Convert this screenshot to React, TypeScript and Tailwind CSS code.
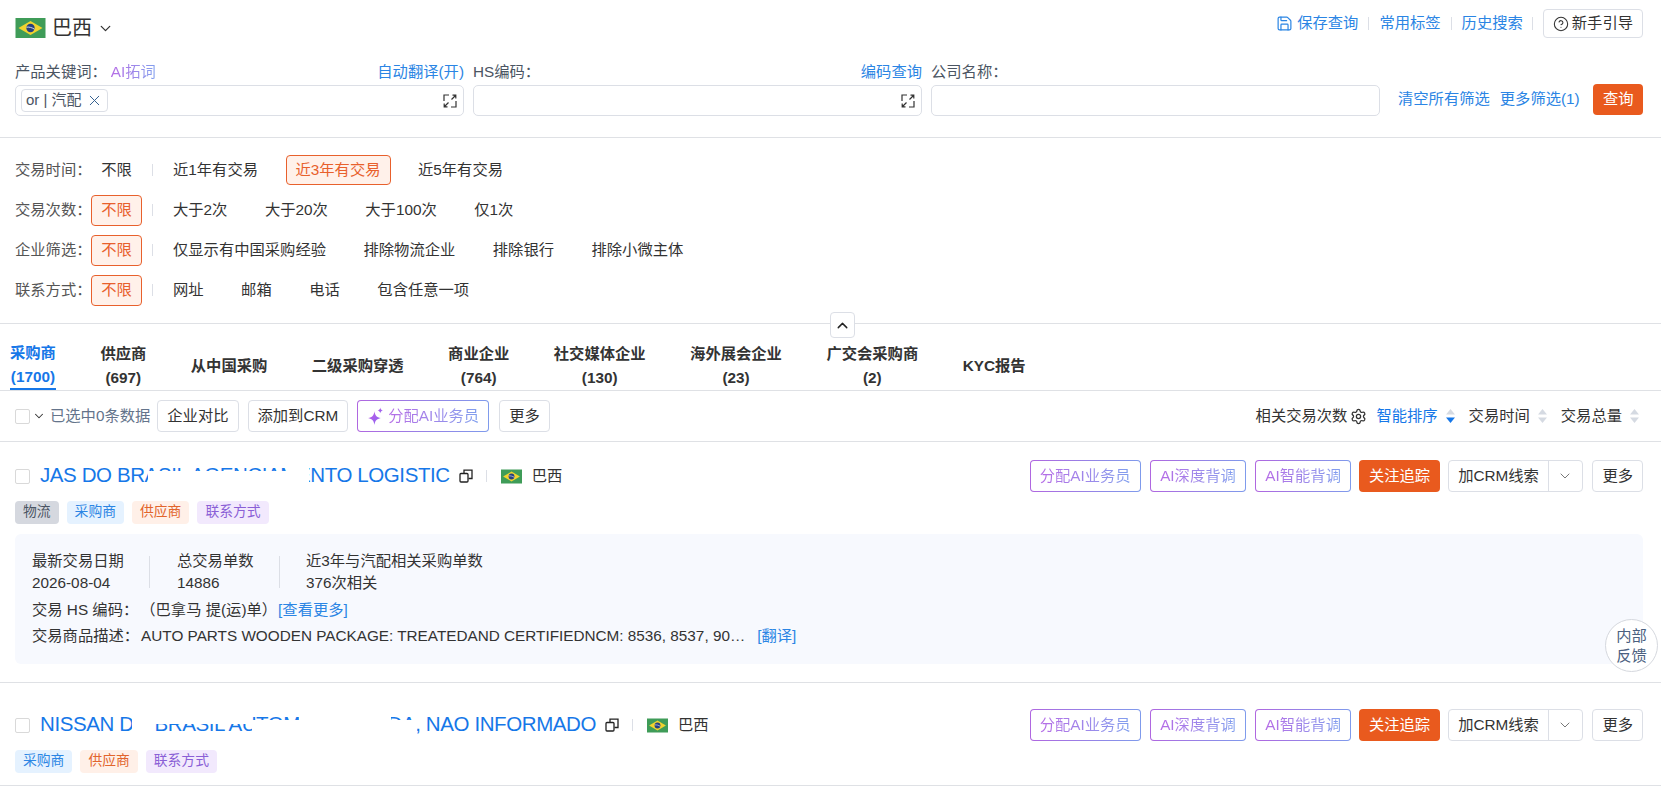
import React from 'react';
import { ChevronDown, ChevronUp, CircleHelp, Save, Settings, X } from 'lucide-react';

const gradientBorder =
  'border border-transparent [background:linear-gradient(#fff,#fff)_padding-box,linear-gradient(90deg,#b067e0,#7f9bec)_border-box]';
const gradientText = 'bg-gradient-to-r from-[#b56be6] to-[#7f9fee] bg-clip-text text-transparent';

const Flag = ({ w, h }: { w: number; h: number }) => (
  <svg width={w} height={h} viewBox="0 0 30 20" className="shrink-0">
    <rect width="30" height="20" fill="#3f9c58" />
    <path d="M15 3 L27 10 L15 17 L3 10 Z" fill="#f2d32e" />
    <circle cx="15" cy="10" r="4.2" fill="#27407f" />
    <path d="M11 9.2 C13.5 8.8 16.5 9.5 19 11.2" stroke="#fff" strokeWidth="0.8" fill="none" />
  </svg>
);

const ExpandIcon = () => (
  <svg width="16" height="16" viewBox="0 0 16 16" fill="none" stroke="#333" strokeWidth="1.2" className="shrink-0">
    <path d="M7 2 H2 V8" />
    <path d="M14 8 V14 H9" />
    <path d="M9.5 6.5 L13.5 2.5 M10.5 2.2 H13.8 V5.5" />
    <path d="M6.5 9.5 L2.5 13.5 M2.2 10.5 V13.8 H5.5" />
  </svg>
);

const CopyIcon = () => (
  <svg width="14" height="14" viewBox="0 0 14 14" fill="none" stroke="#222" strokeWidth="1.3" className="shrink-0">
    <rect x="1" y="4.5" width="8" height="8.5" rx="1" />
    <path d="M5 4 V1.2 H13 V9.5 H9.5" />
  </svg>
);

const Sparkle = () => (
  <svg width="17" height="19" viewBox="0 0 16 18" className="shrink-0">
    <defs>
      <linearGradient id="spark" x1="0" y1="0" x2="1" y2="1">
        <stop offset="0" stopColor="#c05ee8" />
        <stop offset="1" stopColor="#8a63f0" />
      </linearGradient>
    </defs>
    <path d="M7 4 C7.6 8 9 9.6 13 10.5 C9 11.4 7.6 13 7 17 C6.4 13 5 11.4 1 10.5 C5 9.6 6.4 8 7 4 Z" fill="url(#spark)" />
    <path d="M12.5 0.5 C12.8 2.2 13.4 2.8 15 3.2 C13.4 3.6 12.8 4.2 12.5 6 C12.2 4.2 11.6 3.6 10 3.2 C11.6 2.8 12.2 2.2 12.5 0.5 Z" fill="url(#spark)" />
  </svg>
);

const SortCaret = ({ active }: { active?: boolean }) => (
  <svg width="11" height="18" viewBox="0 0 11 18" className="ml-[7px] shrink-0">
    <path d="M5.5 2 L10 7.5 H1 Z" fill="#d5dae2" />
    <path d="M5.5 16 L10 10.5 H1 Z" fill={active ? '#1677e8' : '#d5dae2'} />
  </svg>
);

const Checkbox = () => <span className="block size-[15px] shrink-0 rounded-[2px] border border-[#d9d9d9] bg-white" />;

const OutlineBtn = ({ children, className = '' }: { children: React.ReactNode; className?: string }) => (
  <button className={`flex h-[32px] items-center rounded-[4px] border border-[#dcdfe6] bg-white px-[9px] text-[15.3px] text-[#333] ${className}`}>
    {children}
  </button>
);

const AiBtn = ({ label, icon }: { label: string; icon?: boolean }) => (
  <button className={`flex h-[32px] items-center gap-[4px] rounded-[4px] px-[9px] text-[15.3px] ${gradientBorder}`}>
    {icon && <Sparkle />}
    <span className={gradientText}>{label}</span>
  </button>
);

const Field = ({ left, right, value }: { left: React.ReactNode; right?: string; value?: boolean }) => (
  <div className="flex w-[449px] shrink-0 flex-col">
    <div className="flex h-[22px] items-center justify-between text-[15.3px]">
      <div className="flex items-center text-[#4b5563]">{left}</div>
      {right && <span className="text-[#2b85e4]">{right}</span>}
    </div>
    <div className="mt-[2px] flex h-[31px] items-center justify-between rounded-[5px] border border-[#dcdfe6] bg-white pl-[5px] pr-[5px]">
      {value ? (
        <span className="flex h-[23px] items-center gap-[4px] rounded-[4px] border border-[#dcdfe6] px-[4px] text-[15px] text-[#4b5563]">
          or | 汽配 <X size={17} strokeWidth={1.4} className="text-[#35608f]" />
        </span>
      ) : (
        <span />
      )}
      {right && <ExpandIcon />}
    </div>
  </div>
);

const FilterRow = ({ label, options, chipFirst, chipOption }: { label: string; options: string[]; chipFirst?: boolean; chipOption?: string }) => (
  <div className="flex h-[40px] items-center text-[15.3px] text-[#333]">
    <span className="w-[76px] shrink-0 whitespace-nowrap text-[#555]">{label}</span>
    <span className={`flex h-[31px] w-[51px] items-center justify-center rounded-[4px] ${chipFirst ? 'border border-[#e8602c] bg-[#fff1ea] text-[#e8602c]' : ''}`}>不限</span>
    <span className="ml-[10px] mr-[10px] h-[12px] w-px bg-[#dcdfe6]" />
    <div className="flex items-center gap-[17.5px]">
      {options.map((o) => (
        <span
          key={o}
          className={`flex h-[30px] items-center rounded-[4px] ${o === chipOption ? 'border border-[#e8602c] bg-[#fff1ea] px-[9px] text-[#e8602c]' : 'px-[10px]'}`}
        >
          {o}
        </span>
      ))}
    </div>
  </div>
);

const tabs: [string, string?][] = [
  ['采购商', '(1700)'],
  ['供应商', '(697)'],
  ['从中国采购'],
  ['二级采购穿透'],
  ['商业企业', '(764)'],
  ['社交媒体企业', '(130)'],
  ['海外展会企业', '(23)'],
  ['广交会采购商', '(2)'],
  ['KYC报告'],
];

const Tag = ({ kind, children }: { kind: string; children: React.ReactNode }) => {
  const tone: Record<string, string> = {
    gray: 'bg-[#d5d8df] text-[#4b5563]',
    blue: 'bg-[#e5f2ff] text-[#2b85e4]',
    orange: 'bg-[#fff0e8] text-[#e2652c]',
    purple: 'bg-[#f2e9fd] text-[#8a5fd6]',
  };
  return <span className={`flex h-[23px] items-center rounded-[4px] px-[8px] text-[13.8px] ${tone[kind]}`}>{children}</span>;
};

const CardActions = () => (
  <div className="ml-auto flex items-center gap-[9.5px]">
    <AiBtn label="分配AI业务员" />
    <AiBtn label="AI深度背调" />
    <AiBtn label="AI智能背调" />
    <button className="-ml-[1px] h-[32px] rounded-[4px] bg-[#e95a1e] px-[9.5px] text-[15.3px] text-white">关注追踪</button>
    <div className="-ml-[1px] flex h-[32px] items-center rounded-[4px] border border-[#dcdfe6] text-[15.3px] text-[#333]">
      <span className="flex h-full items-center border-r border-[#dcdfe6] px-[9px]">加CRM线索</span>
      <span className="flex w-[33px] justify-center">
        <ChevronDown size={16} strokeWidth={1.2} className="text-[#555]" />
      </span>
    </div>
    <OutlineBtn>更多</OutlineBtn>
  </div>
);

const CardTitle = ({ name, masks }: { name: string; masks: string[] }) => (
  <div className="flex items-center">
    <Checkbox />
    <span className="relative ml-[10px] mb-[3px] whitespace-nowrap text-[20.5px] leading-[28px] tracking-[-0.4px] text-[#1677e8]">
      {name}
      {masks.map((m) => (
        <span key={m} className={`absolute bg-white ${m}`} />
      ))}
    </span>
    <span className="ml-[9px]">
      <CopyIcon />
    </span>
    <span className="ml-[13px] mr-[14px] h-[12px] w-px bg-[#dcdfe6]" />
    <Flag w={21} h={15} />
    <span className="ml-[10px] text-[15.3px] text-[#333]">巴西</span>
  </div>
);

export default function App() {
  return (
    <div className="relative h-[790px] overflow-hidden bg-white [font-family:'Liberation_Sans','Noto_Sans_CJK_SC',sans-serif]">
      {/* search head */}
      <div className="h-[138px] border-b border-[#dfe1e5] pl-[15px] pr-[18px]">
        <div className="flex h-[61px] items-start justify-between pt-[9px]">
          <div className="mt-[4px] flex items-center">
            <Flag w={31} h={20} />
            <span className="ml-[6px] text-[20px] text-[#333]">巴西</span>
            <ChevronDown size={17} strokeWidth={1.8} className="ml-[5px] text-[#333]" />
          </div>
          <div className="flex items-center text-[15.3px] text-[#2b85e4]">
            <Save size={17} strokeWidth={1.7} className="mr-[4px]" />
            <span>保存查询</span>
            <span className="mx-[10px] h-[13px] w-px bg-[#dcdfe6]" />
            <span>常用标签</span>
            <span className="mx-[10px] h-[13px] w-px bg-[#dcdfe6]" />
            <span>历史搜索</span>
            <span className="ml-[9.5px] mr-[9.5px] h-[13px] w-px bg-[#dcdfe6]" />
            <button className="flex h-[29px] items-center gap-[3px] rounded-[4px] border border-[#dcdfe6] px-[9px] text-[#333]">
              <CircleHelp size={16} strokeWidth={1.6} />
              新手引导
            </button>
          </div>
        </div>
        <div className="flex gap-[9px]">
          <Field
            left={
              <>
                产品关键词：<span className={`ml-[4px] ${gradientText}`}>AI拓词</span>
              </>
            }
            right="自动翻译(开)"
            value
          />
          <Field left="HS编码：" right="编码查询" />
          <Field left="公司名称：" />
          <div className="mt-[23px] ml-[9px] flex h-[31px] flex-1 items-center text-[15.3px] text-[#2b85e4]">
            <span>清空所有筛选</span>
            <span className="ml-[10px] whitespace-nowrap">更多筛选(1)</span>
            <button className="ml-auto h-[31px] rounded-[4px] bg-[#e95a1e] px-[9.5px] text-white">查询</button>
          </div>
        </div>
      </div>

      {/* quick filters */}
      <div className="relative h-[186px] border-b border-[#dfe1e5] px-[15px] pt-[12px]">
        <FilterRow label="交易时间：" options={['近1年有交易', '近3年有交易', '近5年有交易']} chipOption="近3年有交易" />
        <FilterRow label="交易次数：" options={['大于2次', '大于20次', '大于100次', '仅1次']} chipFirst />
        <FilterRow label="企业筛选：" options={['仅显示有中国采购经验', '排除物流企业', '排除银行', '排除小微主体']} chipFirst />
        <FilterRow label="联系方式：" options={['网址', '邮箱', '电话', '包含任意一项']} chipFirst />
        <button className="absolute bottom-[-15px] left-[830px] flex h-[26px] w-[25px] items-center justify-center rounded-[4px] border border-[#dcdfe6] bg-white">
          <ChevronUp size={17} strokeWidth={2} className="text-[#222]" />
        </button>
      </div>

      {/* tabs */}
      <div className="flex h-[67px] items-end gap-[44.5px] border-b border-[#dfe1e5] pl-[10px] text-[15.3px] font-bold text-[#333]">
        {tabs.map(([name, count], i) => (
          <div key={name} className={`flex h-[48px] flex-col items-center justify-center whitespace-nowrap leading-[24px] ${i === 0 ? 'border-b-2 border-[#1677e8] text-[#1677e8]' : ''}`}>
            <span>{name}</span>
            {count && <span>{count}</span>}
          </div>
        ))}
      </div>

      {/* toolbar */}
      <div className="flex h-[51px] items-center border-b border-[#dfe1e5] pl-[15px] pr-[18px]">
        <Checkbox />
        <ChevronDown size={14} strokeWidth={1.8} className="ml-[2px] text-[#333]" />
        <span className="ml-[4px] text-[15.3px] text-[#64748b]">已选中0条数据</span>
        <div className="ml-[7px] flex items-center gap-[9px]">
          <OutlineBtn>企业对比</OutlineBtn>
          <OutlineBtn>添加到CRM</OutlineBtn>
          <AiBtn label="分配AI业务员" icon />
          <OutlineBtn className="ml-[1px]">更多</OutlineBtn>
        </div>
        <div className="ml-auto flex items-center pr-[3px] text-[15.3px] text-[#333]">
          <span>相关交易次数</span>
          <Settings size={17} strokeWidth={1.8} className="ml-[3px]" />
          <span className="ml-[9px] text-[#1677e8]">智能排序</span>
          <SortCaret active />
          <span className="ml-[13px]">交易时间</span>
          <SortCaret />
          <span className="ml-[13px]">交易总量</span>
          <SortCaret />
        </div>
      </div>

      {/* first result */}
      <div className="border-b border-[#dfe1e5] pb-[18px] pl-[15px] pr-[18px] pt-[18px]">
        <div className="flex h-[32px] items-center">
          <CardTitle
            name="JAS DO BRASIL AGENCIAMENTO LOGISTIC"
            masks={['left-[108px] top-[10px] h-[18px] w-[140px]', 'left-[247px] top-0 h-[28px] w-[22px]']}
          />
          <CardActions />
        </div>
        <div className="mt-[9px] flex gap-[8px]">
          <Tag kind="gray">物流</Tag>
          <Tag kind="blue">采购商</Tag>
          <Tag kind="orange">供应商</Tag>
          <Tag kind="purple">联系方式</Tag>
        </div>
        <div className="mt-[10px] h-[130px] rounded-[6px] bg-[#f7f9fe] px-[17px] pt-[16px] text-[15.3px] leading-[22px] text-[#333]">
          <div className="flex">
            <div className="w-[117px]">
              <div>最新交易日期</div>
              <div>2026-08-04</div>
            </div>
            <span className="mt-[6px] h-[32px] w-px bg-[#dcdfe6]" />
            <div className="ml-[27px] w-[102px]">
              <div>总交易单数</div>
              <div>14886</div>
            </div>
            <span className="mt-[6px] h-[32px] w-px bg-[#dcdfe6]" />
            <div className="ml-[26px]">
              <div>近3年与汽配相关采购单数</div>
              <div>376次相关</div>
            </div>
          </div>
          <div className="mt-[5px] flex">
            <span>交易 HS 编码：</span>
            <span className="ml-[2px]">（巴拿马 提(运)单）</span>
            <span className="ml-[1px] text-[#2b85e4]">[查看更多]</span>
          </div>
          <div className="mt-[4px] flex">
            <span>交易商品描述：</span>
            <span className="ml-[2px]">AUTO PARTS WOODEN PACKAGE: TREATEDAND CERTIFIEDNCM: 8536, 8537, 90…</span>
            <span className="ml-[12px] text-[#2b85e4]">[翻译]</span>
          </div>
        </div>
      </div>

      {/* second result */}
      <div className="border-b border-[#dfe1e5] pb-[12px] pl-[15px] pr-[18px] pt-[26px]">
        <div className="flex h-[32px] items-center">
          <CardTitle
            name="NISSAN DO BRASIL AUTOMOVEIS LTDA, NAO INFORMADO"
            masks={[
              'left-[92px] top-0 h-[28px] w-[22px]',
              'left-[114px] top-0 h-[14px] w-[98px]',
              'left-[212px] top-[10px] h-[18px] w-[47px]',
              'left-[259px] top-0 h-[28px] w-[92px]',
              'left-[351px] top-[10px] h-[18px] w-[26px]',
            ]}
          />
          <CardActions />
        </div>
        <div className="mt-[9px] flex gap-[8px]">
          <Tag kind="blue">采购商</Tag>
          <Tag kind="orange">供应商</Tag>
          <Tag kind="purple">联系方式</Tag>
        </div>
      </div>

      {/* feedback bubble */}
      <div className="absolute left-[1605px] top-[619px] flex size-[53px] items-center justify-center rounded-full border border-[#d5d8de] bg-white text-center text-[15.3px] leading-[20px] text-[#4a6080]">
        内部
        <br />
        反馈
      </div>
    </div>
  );
}
